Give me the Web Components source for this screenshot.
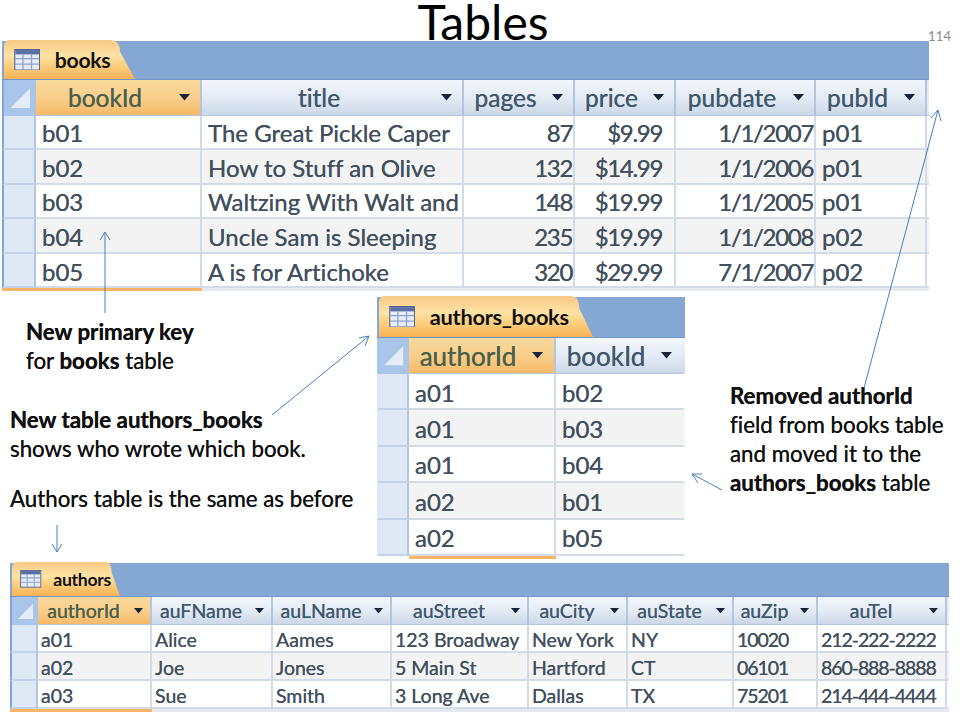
<!DOCTYPE html>
<html>
<head>
<meta charset="utf-8">
<title>Tables</title>
<style>
  html, body { margin: 0; padding: 0; background: #fff; }
  body { font-family: Lato, "Open Sans", sans-serif; font-variant-ligatures: none; }
</style>
</head>
<body>
<lecture-slide>
  <span slot="title">Tables</span>
  <span slot="number">114</span>

  <access-table style="left:2px;top:41px;width:927px" name="books" tab="131" curve="25" strip="39" head="35.5" row="34.6" font="24" hfont="24.5" pad="6" sel="34" edge="1" hpad="10" tabfont="21.2" new="grey"
    cols="166,262,111,101,140,111,2"
    align="l,l,r,p,r,l,l"
    rows='[["b01","The Great Pickle Caper","87","$9.99","1/1/2007","p01",""],
           ["b02","How to Stuff an Olive","132","$14.99","1/1/2006","p01",""],
           ["b03","Waltzing With Walt and","148","$19.99","1/1/2005","p01",""],
           ["b04","Uncle Sam is Sleeping","235","$19.99","1/1/2008","p02",""],
           ["b05","A is for Artichoke","320","$29.99","7/1/2007","p02",""]]'
    heads="bookId,title,pages,price,pubdate,pubId,"></access-table>

  <access-table style="left:377px;top:297px;width:308px" name="authors_books" tab="214" curve="23" strip="41" head="36" row="36.4" font="24" hfont="26" pad="6" sel="32" edge="0" hpad="11" tabfont="21.8"
    cols="147,129" align="l,l"
    rows='[["a01","b02"],["a01","b03"],["a01","b04"],["a02","b01"],["a02","b05"]]'
    heads="authorId,bookId"></access-table>

  <access-table style="left:10px;top:563px;width:939px" name="authors" tab="108" curve="14" strip="34" head="28" row="28" font="19.5" hfont="19.5" pad="3" sel="28" edge="1" hpad="7" tabfont="17.6" new="grey"
    cols="114,121,119,137,99,106,84,129,2" align="l,l,l,l,l,l,l,l,l"
    rows='[["a01","Alice","Aames","123 Broadway","New York","NY","10020","212-222-2222",""],
           ["a02","Joe","Jones","5 Main St","Hartford","CT","06101","860-888-8888",""],
           ["a03","Sue","Smith","3 Long Ave","Dallas","TX","75201","214-444-4444",""]]'
    heads="authorId,auFName,auLName,auStreet,auCity,auState,auZip,auTel,"></access-table>

  <slide-note style="left:26px;top:317px"><b>New primary key</b><br>for <b>books</b> table</slide-note>
  <slide-note style="left:10px;top:405px"><b>New table authors_books</b><br>shows who wrote which book.</slide-note>
  <slide-note style="left:10px;top:484px">Authors table is the same as before</slide-note>
  <slide-note style="left:730px;top:381px"><b>Removed authorId</b><br>field from books table<br>and moved it to the<br><b>authors_books</b> table</slide-note>
</lecture-slide>

<script>
class LectureSlide extends HTMLElement {
  connectedCallback() {
    this.attachShadow({ mode: 'open' });
    this.shadowRoot.innerHTML = `
      <style>
        :host { display: block; position: relative; width: 960px; height: 720px; overflow: hidden; background: #fff; }
        .title { font-size: 48px; line-height: 44px; text-align: center; color: #000; padding-left: 6px; }
        .num { position: absolute; left: 928px; top: 28px; font-size: 13px; line-height: 16px; color: #8b8b8b; letter-spacing: .2px; }
        svg { position: absolute; left: 0; top: 0; z-index: 5; }
      </style>
      <div class="title"><slot name="title"></slot></div>
      <div class="num"><slot name="number"></slot></div>
      <slot></slot>
      <svg width="960" height="720" fill="none" stroke="#4a7ebb" stroke-width="1">
        <path d="M105 313V232M100 240L105 232L110 240"/>
        <path d="M272 415L369 336M359 338L369 336L365 346"/>
        <path d="M864 388L938 110M931 118L938 110L941 121"/>
        <path d="M722 490L692 474M702 474L692 474L698 483"/>
        <path d="M57 525V552M52 544L57 552L62 544"/>
      </svg>`;
  }
}
customElements.define('lecture-slide', LectureSlide);

class SlideNote extends HTMLElement {
  connectedCallback() {
    this.attachShadow({ mode: 'open' });
    this.shadowRoot.innerHTML = `
      <style>
        :host { display: block; position: absolute; font-size: 22.3px; line-height: 29px; color: #111; white-space: nowrap; text-shadow: 0 0 .4px #111; }
      </style>
      <slot></slot>`;
  }
}
customElements.define('slide-note', SlideNote);

class AccessTable extends HTMLElement {
  connectedCallback() {
    const a = n => this.getAttribute(n);
    const cols = a('cols').split(',').map(Number);
    const heads = a('heads').split(',');
    const align = a('align').split(',');
    const rows = JSON.parse(a('rows'));
    const font = +a('font'), hfont = +a('hfont'), strip = +a('strip'), tab = +a('tab'), sel = +a('sel'), curve = +a('curve');
    const edge = a('edge') === '1' ? '#7fa6d8' : '#dfe8f5';
    const arrow = Math.round(font * 0.47);

    const headCells = heads.map((h, i) => h ? `
      <div class="hd ${i === 0 ? 'on' : ''} ${i === heads.length - 1 ? 'last' : ''}">
        <span class="lbl">${h}</span>
        <svg class="drop" viewBox="0 0 10 6" width="${arrow}" height="${arrow * 0.6}"><path d="M0 0H10L5 6Z" fill="#16233a"/></svg>
      </div>` : `<div class="hd empty"></div>`).join('');

    const cellClass = (c, i, n, r) => {
      const cls = ['td'];
      if (n % 2) cls.push('alt');
      if (align[i] === 'r') cls.push('r');
      if (align[i] === 'p') cls.push('r', 'inset');
      if (/^[\d$\/.\-]+$/.test(c)) cls.push('num');
      if (c === '') cls.push('empty');
      if (i === r.length - 1) cls.push('last');
      return cls.join(' ');
    };

    const bodyRows = rows.map((r, n) => `
      <div class="sel"></div>
      ${r.map((c, i) => `<div class="${cellClass(c, i, n, r)}">${c}</div>`).join('')}
    `).join('');

    this.attachShadow({ mode: 'open' });
    this.shadowRoot.innerHTML = `
      <style>
        :host { display: block; position: absolute; background: #fff; font-family: Lato, "Open Sans", sans-serif; font-variant-ligatures: none; }
        .strip { height: ${strip}px; background: #84a7d4; border-bottom: 1px solid #6f97cb; box-sizing: border-box; display: flex; align-items: flex-end; padding-left: 2px; }
        .tab { width: ${tab}px; height: ${strip}px; box-sizing: border-box; display: flex; align-items: center; gap: ${font * 0.6}px; padding-left: ${font * 0.42}px;
          font-weight: 700; font-size: ${a('tabfont')}px; color: #111; letter-spacing: -.3px;
          background: linear-gradient(#f7c983, #fde2a6 40%, #fbcf80 65%, #f9b254);
          clip-path: path('M0 ${strip}V6Q0 0 6 0H${tab - curve}Q${tab - curve * 0.6} 0 ${tab - curve * 0.6} ${strip * 0.3}L${tab} ${strip}Z'); }
        .grid { display: grid; grid-template-columns: ${sel}px ${cols.map(c => c + 'px').join(' ')}; grid-template-rows: ${a('head')}px; grid-auto-rows: ${a('row')}px; }
        .corner { background: #a9c5ea; border-left: 2px solid ${a('edge') === '1' ? '#7fa6d8' : '#a9c5ea'}; box-sizing: border-box; display: flex; align-items: center; justify-content: center; }
        .hd { box-sizing: border-box; display: flex; align-items: center; padding: 0 ${a('hpad')}px 0 0; gap: 5px;
          background: linear-gradient(#f3f7fc, #e4ebf5 50%, #ccd8e8); border-right: 2px solid #b4c6de; border-bottom: 1px solid #b4c6de;
          color: #41586c; font-size: ${hfont}px; min-width: 0; overflow: hidden; text-shadow: 0 0 .5px #41586c; }
        .hd.empty { padding: 0; border-right: 0; background: #e6ecf5; }
        .hd.last { border-right-color: transparent; }
        .lbl { flex: 1; text-align: center; }
        .hd.on { background: linear-gradient(#f9d99d, #f9cf8b 50%, #f6b967); color: #49604f; text-shadow: 0 0 .5px #49604f; }
        .drop { flex: none; }
        .sel { background: #dfe8f5; border-left: 2px solid ${edge}; border-right: 2px solid #b3c6e0; border-bottom: 2px solid #c3d2e6; box-sizing: border-box; }
        .td { box-sizing: border-box; display: flex; align-items: center; padding: 2px ${a('pad')}px 0; background: #fff; white-space: nowrap; overflow: hidden;
          border-right: 2px solid #d3dbe7; border-bottom: 2px solid #d3dbe7; color: #42505e; font-size: ${font}px; text-shadow: 0 0 .5px #42505e; }
        .td.alt { background: #f3f3f3; }
        .td.r { justify-content: flex-end; padding-right: 1px; }
        .td.inset { padding-right: 12px; }
        .td.num { letter-spacing: -.055em; }
        .td.empty { padding: 0; border-right: 0; }
        .td.last { border-right-color: transparent; }
        .new { display: grid; grid-template-columns: ${sel}px ${cols[0]}px 1fr; height: 3px; }
        .new i { background: #f9b466; }
        .new i:first-child { background: ${a('new') === 'grey' ? '#f9b466' : 'transparent'}; }
        .new i:last-child { background: ${a('new') === 'grey' ? '#e6e9ee' : 'transparent'}; }
      </style>
      <div class="strip">
        <div class="tab">
          <svg width="${font * 1.1}" height="${font * 0.9}" viewBox="0 0 24 20">
            <rect x=".5" y=".5" width="23" height="19" fill="#e7edf8" stroke="#4d5f8e"/>
            <rect x="1" y="1" width="22" height="4" fill="#5a6fa6"/>
            <path d="M1 9H23M1 14H23M8 5V19M16 5V19" stroke="#8ea3cc" stroke-width="1.2"/>
          </svg>
          <span>${a('name')}</span>
        </div>
      </div>
      <div class="grid">
        <div class="corner">
          <svg width="${sel * 0.6}" height="${sel * 0.6}" viewBox="0 0 20 20"><path d="M20 0V20H0Z" fill="#e4ecf7"/></svg>
        </div>
        ${headCells}
        ${bodyRows}
      </div>
      <div class="new"><i></i><i></i><i></i></div>`;
  }
}
customElements.define('access-table', AccessTable);
</script>
</body>
</html>
